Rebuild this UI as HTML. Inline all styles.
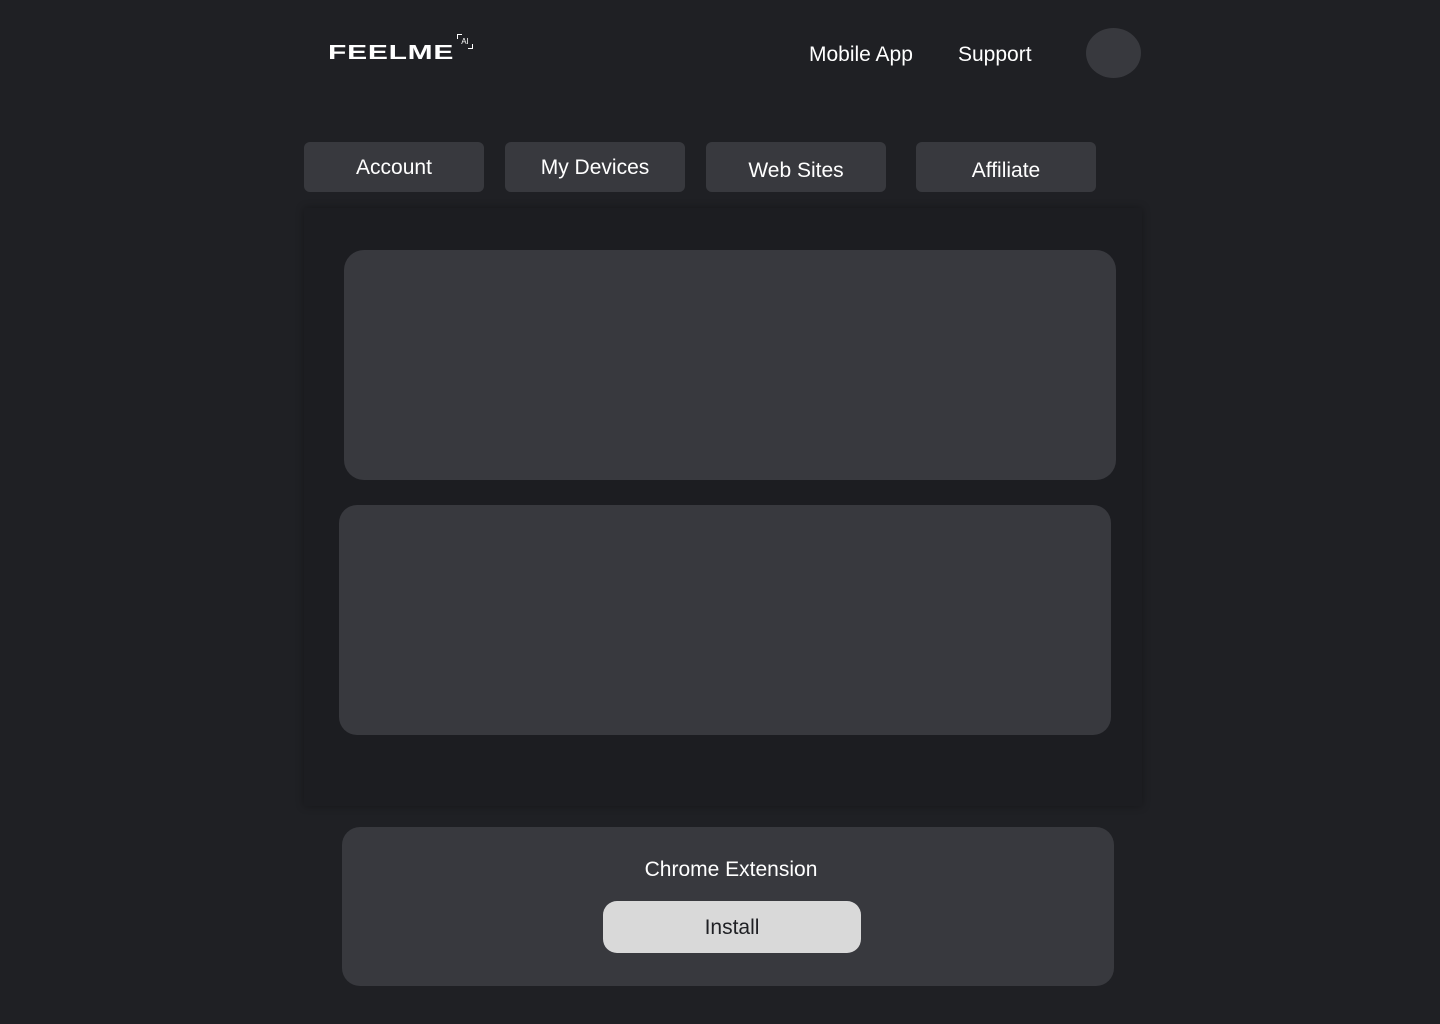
<!DOCTYPE html>
<html><head><style>
body{margin:0;width:1440px;height:1024px;background:#1f2024;font-family:"Liberation Sans",sans-serif;color:#fff;position:relative;overflow:hidden}
.a{position:absolute}
.logo{left:328px;top:42px;font-weight:900;font-size:20px;line-height:22px;letter-spacing:0.5px;transform:scaleX(1.5);transform-origin:left}
.ai{left:457px;top:34px;width:16px;height:15px;font-size:8px;text-align:center;line-height:15px}
.ai:before,.ai:after{content:"";position:absolute;width:4px;height:4px;border:1px solid #fff}
.ai:before{left:0;top:0;border-right:none;border-bottom:none}
.ai:after{right:0;bottom:0;border-left:none;border-top:none}
.nav{font-size:21px;top:43px}
.tab{top:142px;width:180px;height:50px;background:#38393e;border-radius:6px;font-size:21px;text-align:center;line-height:52px}
.card{background:#38393e}
</style></head><body>
<div class="a logo">FEELME</div>
<div class="a ai">AI</div>
<div class="a nav" style="left:809px">Mobile App</div>
<div class="a nav" style="left:958px">Support</div>
<div class="a" style="left:1086px;top:28px;width:55px;height:50px;border-radius:50%;background:#38393e"></div>
<div class="a tab" style="left:304px;line-height:52px">Account</div>
<div class="a tab" style="left:505px;line-height:52px">My Devices</div>
<div class="a tab" style="left:706px;line-height:58px">Web Sites</div>
<div class="a tab" style="left:916px;line-height:58px">Affiliate</div>
<div class="a" style="left:304px;top:208px;width:838px;height:598px;background:#1c1d21;box-shadow:0 0 8px rgba(0,0,0,.3)"></div>
<div class="a card" style="left:344px;top:250px;width:772px;height:230px;border-radius:20px"></div>
<div class="a card" style="left:339px;top:505px;width:772px;height:230px;border-radius:18px"></div>
<div class="a card" style="left:342px;top:827px;width:772px;height:159px;border-radius:18px"></div>
<div class="a" style="left:345px;width:772px;top:858px;text-align:center;font-size:21px">Chrome Extension</div>
<div class="a" style="left:603px;top:901px;width:258px;height:52px;border-radius:14px;background:#d9d9d9;color:#1f2024;font-size:21px;text-align:center;line-height:54px">Install</div>
</body></html>
